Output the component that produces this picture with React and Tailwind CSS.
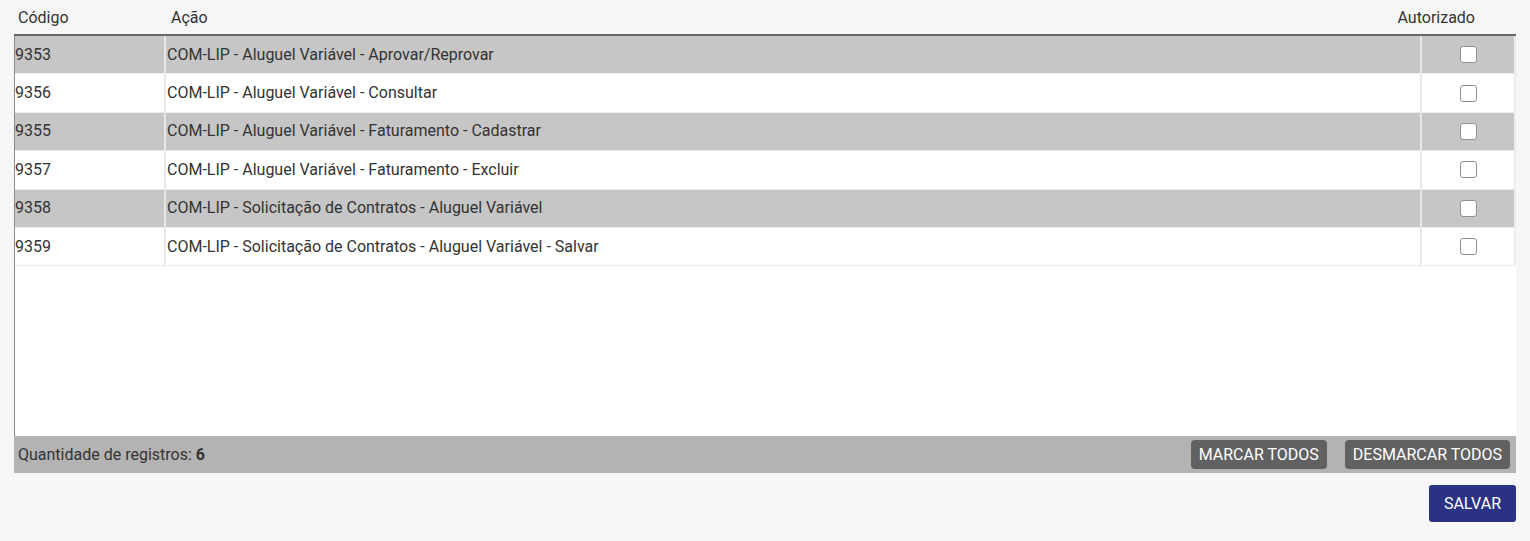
import React, { useState } from 'react';

const rows = [
  { codigo: '9353', acao: 'COM-LIP - Aluguel Variável - Aprovar/Reprovar' },
  { codigo: '9356', acao: 'COM-LIP - Aluguel Variável - Consultar' },
  { codigo: '9355', acao: 'COM-LIP - Aluguel Variável - Faturamento - Cadastrar' },
  { codigo: '9357', acao: 'COM-LIP - Aluguel Variável - Faturamento - Excluir' },
  { codigo: '9358', acao: 'COM-LIP - Solicitação de Contratos - Aluguel Variável' },
  { codigo: '9359', acao: 'COM-LIP - Solicitação de Contratos - Aluguel Variável - Salvar' },
];

const App = () => {
  const [checked, setChecked] = useState(rows.map(() => false));

  const toggle = (i) => {
    setChecked((prev) => prev.map((v, j) => (j === i ? !v : v)));
  };

  return (
    <div
      className="min-h-screen bg-[#f6f6f6] text-[16px] text-[#333]"
      style={{ fontFamily: 'Roboto, "Liberation Sans", sans-serif' }}
    >
      <div className="px-[14px]">
        {/* Header */}
        <div className="flex h-[34px] items-center pt-[2px]">
          <div className="w-[152px] pl-[4px]">Código</div>
          <div className="flex-1 pl-[5px]">Ação</div>
          <div className="w-[130px] pr-[41px] text-right">Autorizado</div>
        </div>
        <div className="h-[2px] bg-[#666]" />

        {/* Body */}
        <div className="h-[400px] border-l border-[#8a8a8a] bg-white">
          {rows.map((row, i) => (
            <div
              key={row.codigo}
              className={`flex h-[38.4px] items-center border-b border-[#ececec] ${
                i % 2 === 0 ? 'bg-[#c6c6c6]' : 'bg-white'
              }`}
            >
              <div className="flex h-full w-[151px] items-center border-r-2 border-[#e6e6e6]">
                {row.codigo}
              </div>
              <div className="flex h-full flex-1 items-center border-r-2 border-[#e6e6e6] pl-px">
                {row.acao}
              </div>
              <div className="flex h-full w-[94px] items-center justify-center border-r-2 border-[#ececec]">
                <button
                  onClick={() => toggle(i)}
                  className="flex h-[17px] w-[17px] items-center justify-center rounded-[3px] border border-[#8f8f9d] bg-white"
                >
                  {checked[i] && (
                    <svg viewBox="0 0 12 12" className="h-3 w-3">
                      <path d="M2 6.5l2.5 2.5L10 3" fill="none" stroke="#333" strokeWidth="2" />
                    </svg>
                  )}
                </button>
              </div>
            </div>
          ))}
        </div>

        {/* Footer */}
        <div className="flex h-[37px] items-center justify-between bg-[#b3b3b3] pl-[4px] pr-[6px]">
          <div>
            Quantidade de registros: <span className="font-bold">6</span>
          </div>
          <div className="flex gap-[18px]">
            <button
              onClick={() => setChecked(rows.map(() => true))}
              className="h-[29px] rounded-[4px] bg-[#616161] px-[8px] text-[16px] text-white"
            >
              MARCAR TODOS
            </button>
            <button
              onClick={() => setChecked(rows.map(() => false))}
              className="h-[29px] rounded-[4px] bg-[#616161] px-[8px] text-[16px] text-white"
            >
              DESMARCAR TODOS
            </button>
          </div>
        </div>

        <div className="mt-[12px] flex justify-end">
          <button className="h-[37px] rounded-[3px] bg-[#2b3183] px-[15px] text-[16px] text-white">
            SALVAR
          </button>
        </div>
      </div>
    </div>
  );
};

export default App;
